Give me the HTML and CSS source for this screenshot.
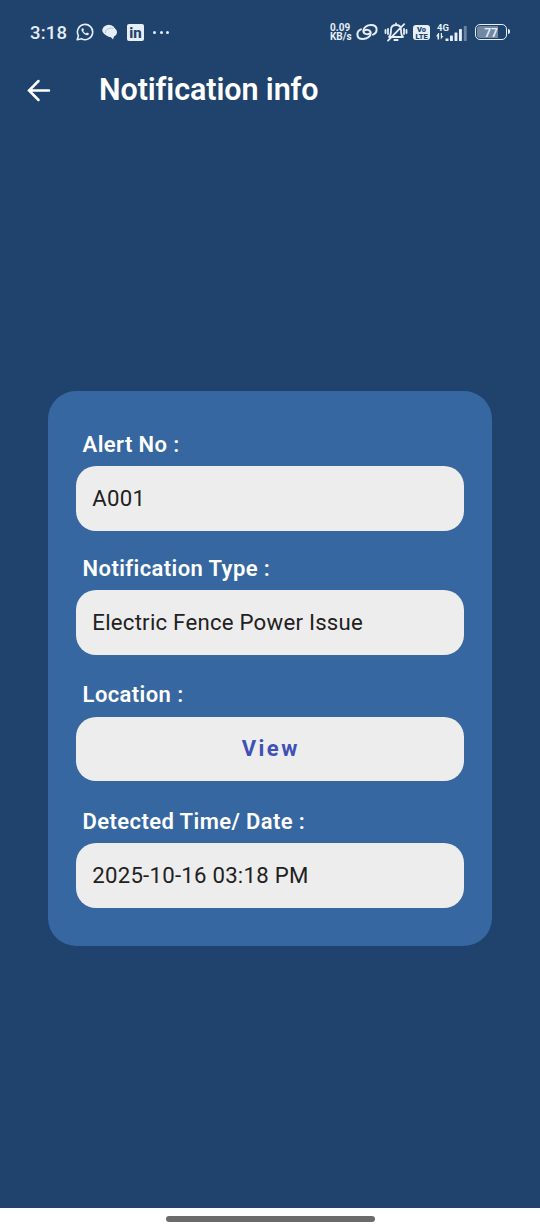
FILE: index.html
```html
<!DOCTYPE html>
<html lang="en">
<head>
<meta charset="utf-8">
<title>Notification info</title>
<link rel="stylesheet" href="styles.css">
</head>
<body>
<div class="screen">
  <div class="status">
    <span class="clock">3:18</span>
    <svg class="whatsapp" width="18" height="18" viewBox="0 0 18 18"><path d="M1.2 16.8 2.4 12.7A7.6 7.6 0 1 1 5.4 15.7Z" fill="none" stroke="currentColor" stroke-width="1.6" stroke-linejoin="round"/><path d="M6.3 5.2C5.4 5.7 5.2 6.7 5.8 8c1 2.2 3 3.9 5.1 4.3 1.1.2 2-.6 2.1-1.7l-2-1-1 1C8.700 10 7.800 9.100 7.200 7.900l.8-1-.8-1.700Z" fill="currentColor"/></svg>
    <svg class="chat" width="16" height="16" viewBox="0 0 16 16"><ellipse cx="6.800" cy="6.200" rx="6.500" ry="5.400" fill="currentColor"/><path d="M7 11l4 4.500 1.500-4.500Z" fill="currentColor"/><ellipse cx="9" cy="8.200" rx="6" ry="5" fill="currentColor"/><path d="M3.500 9C3 6 6 3.800 11.500 4.200" fill="none" stroke="#8fa3bb" stroke-width=".6"/></svg>
    <span class="linkedin">in</span>
    <span class="dots"><i></i><i></i><i></i></span>
    <span class="speed"><span>0.09</span><span>KB/s</span></span>
    <svg class="link" width="22" height="18" viewBox="0 0 22 18"><g fill="none" stroke="currentColor" stroke-width="2" stroke-linecap="round"><path d="M14 10.300C11 12 7.400 11 7.300 8 7.200 4.500 11 2 15 2c3.300 0 5.600 1.600 5.600 4.500 0 2.400-1.500 4.300-3.600 5.100"/><path d="M8 7.700C11 6 14.600 7 14.700 10c.1 3.500-3.700 6-7.700 6-3.300 0-5.600-1.600-5.600-4.500 0-2.400 1.500-4.300 3.600-5.100"/></g></svg>
    <svg class="bell" width="24" height="20" viewBox="0 0 24 20"><g fill="none" stroke="currentColor" stroke-width="1.800" stroke-linecap="round" stroke-linejoin="round"><path d="M5 15h14c-1.600-1.500-2-2.800-2-7 0-3-2-5-5-5S7 5 7 8c0 4.200-.4 5.500-2 7ZM10.300 18h3.400M12 1.500V3M4 18.700 20.200 2.200M4 7v5M1.500 8v3M20 7v5M22.500 8v3"/></g></svg>
    <span class="volte"><span>Vo</span><span>LTE</span></span>
    <svg class="signal" width="32" height="20" viewBox="0 0 32 20"><text class="network" x="1" y="8.500">4G</text><g fill="currentColor"><path d="M2.300 11 0 14.500h1.500v3h1.600V11ZM4.800 11v6.500l2.600-3.500H6v-3ZM9.500 16.500h3V19h-3Z"/><rect x="14" y="13.500" width="2.900" height="5.500" rx=".6"/><rect x="18.500" y="10.500" width="2.900" height="8.500" rx=".6"/><rect x="23" y="7" width="2.900" height="12" rx=".6"/><rect x="27.800" y="4" width="2.900" height="15" rx=".6" opacity=".38"/></g></svg>
    <span class="battery"><span>77</span></span>
  </div>
  <header class="appbar">
    <svg class="back" width="24" height="24" viewBox="0 0 24 24"><path d="M22 12.500H2M11.500 3 2 12.500l9.500 9.500" fill="none" stroke="currentColor" stroke-width="2.500" stroke-linecap="round"/></svg>
    <h1>Notification info</h1>
  </header>
  <main class="card">
    <section class="item"><div class="label">Alert No :</div><div class="field">A001</div></section>
    <section class="item"><div class="label">Notification Type :</div><div class="field">Electric Fence Power Issue</div></section>
    <section class="item spaced"><div class="label">Location :</div><div class="field view">View</div></section>
    <section class="item spaced"><div class="label">Detected Time/ Date :</div><div class="field">2025-10-16 03:18 PM</div></section>
  </main>
  <footer class="navigation"><div class="handle"></div></footer>
</div>
</body>
</html>
```
FILE: styles.css
```css
* { box-sizing: border-box; }
body { margin: 0; font-family: Roboto, sans-serif; }
.screen { width: 540px; height: 1230px; background: #1f436c; color: #fff; display: flex; flex-direction: column; overflow: hidden; }
.status { height: 64px; padding-left: 30px; display: flex; align-items: center; flex: none; color: #e6eef7; }
.status > * { flex: none; }
.clock { width: 46px; font-size: 18.5px; font-weight: 500; letter-spacing: .2px; line-height: 22px; margin-top: 1px; }
.whatsapp { margin-right: 8px; }
.chat { margin-right: 9px; }
.linkedin { width: 17px; height: 17px; border-radius: 2px; background: #e6eef7; color: #1f436c; font-size: 15px; line-height: 18px; font-weight: 800; text-align: center; margin-right: 9px; }
.dots { width: 16px; display: flex; justify-content: space-between; }
.dots i { width: 3px; height: 3px; border-radius: 50%; background: currentColor; }
.speed { display: flex; flex-direction: column; width: 26px; margin-left: 161px; font-size: 10px; line-height: 9px; font-weight: 700; }
.bell { margin-left: 6px; }
.volte { display: flex; flex-direction: column; width: 17px; height: 15px; margin: 0 6px 0 5px; border-radius: 3px; background: #e6eef7; color: #1f436c; font-size: 7.5px; line-height: 7px; padding-top: 1px; font-weight: 900; text-align: center; }
.network { font-size: 9.5px; font-weight: 700; fill: currentColor; }
.battery { width: 32px; height: 16px; margin-left: 7px; border: 1.5px solid currentColor; border-radius: 5px; position: relative; background: linear-gradient(90deg, #7188a3 0 74%, transparent 74%); background-clip: content-box; padding: 1px; font-size: 12px; font-weight: 600; line-height: 14px; text-align: center; }
.battery::after { content: ""; position: absolute; right: -4px; top: 4px; width: 2px; height: 5px; border-radius: 0 2px 2px 0; background: currentColor; }
.appbar { height: 52px; display: flex; align-items: center; padding-left: 27px; flex: none; }
.back { margin-right: 48px; }
h1 { margin: 0; font-size: 30.5px; line-height: 36px; font-weight: 600; letter-spacing: -.1px; }
.card { width: 444px; height: 555px; margin: 275px 0 0 48px; padding: 40px 28px 0 27.600px; border-radius: 28px; background: #3667a0; flex: none; }
.item { margin-bottom: 24px; }
.spaced { margin-top: 26.700px; }
.label { height: 28px; line-height: 28px; padding-left: 7px; margin-bottom: 7.300px; font-size: 22px; font-weight: 600; letter-spacing: .4px; }
.field { height: 64.600px; line-height: 64.600px; padding-left: 16.700px; border-radius: 20px; background: #ededed; color: #212121; font-size: 22.2px; letter-spacing: .24px; }
.view { padding-left: 2px; text-align: center; color: #3f51b5; font-size: 22px; font-weight: 700; letter-spacing: 2.5px; }
.navigation { height: 22px; margin-top: auto; padding-top: 8px; background: #fff; display: flex; justify-content: center; }
.handle { width: 209px; height: 6px; border-radius: 3px; background: #6b6b6b; }
```
